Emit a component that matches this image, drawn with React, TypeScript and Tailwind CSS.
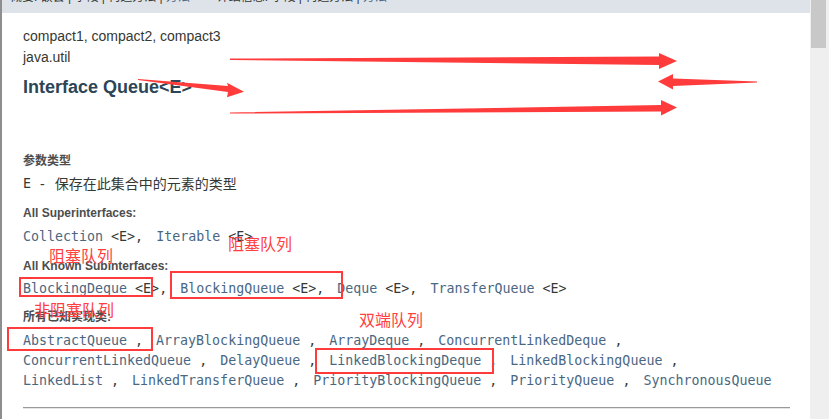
const sans = "font-['Arial','Liberation_Sans','Noto_Sans_CJK_SC',sans-serif]";
const mono = "font-['DejaVu_Sans_Mono','Liberation_Mono',monospace]";

const implRows = [
  ["AbstractQueue", "ArrayBlockingQueue", "ArrayDeque", "ConcurrentLinkedDeque"],
  ["ConcurrentLinkedQueue", "DelayQueue", "LinkedBlockingDeque", "LinkedBlockingQueue"],
  ["LinkedList", "LinkedTransferQueue", "PriorityBlockingQueue", "PriorityQueue", "SynchronousQueue"],
];

function Generic({ name, last }: { name: string; last?: boolean }) {
  return (
    <span className="flex whitespace-pre">
      <span className="text-[#4a6782]">{name}</span>
      <span className="text-[#353833]"> {"<E>"}</span>
      {!last && <span className="mr-[13px] text-[#353833]">,</span>}
    </span>
  );
}

function Annotations() {
  const red = "#ff3b3b";
  return (
    <>
      <svg className="pointer-events-none absolute left-0 top-0" width="829" height="419">
        <polygon fill={red} points="230,58.5 659,56.5 659,53 677,61 659,69 659,65 230,60" />
        <polygon fill={red} points="658,81.5 673,74 673,78.5 757,81.6 757,82.4 673,86 673,89.5" />
        <polygon fill={red} points="230,112.5 661,105 661,100 677,107.5 661,115.5 661,111.5 230,113.5" />
        <polygon fill={red} points="138,79 228,86 227,82.7 244,91.7 227,97.3 228,92 138,80" />
      </svg>
      <div className="absolute left-[19px] top-[277px] h-[20px] w-[134px] border-2 border-[#ff3b3b]" />
      <div className="absolute left-[170px] top-[271px] h-[28px] w-[173px] border-2 border-[#ff3b3b]" />
      <div className="absolute left-[7px] top-[327px] h-[24px] w-[146px] border-2 border-[#ff3b3b]" />
      <div className="absolute left-[315px] top-[348px] h-[26px] w-[179px] border-2 border-[#ff3b3b]" />
      <div className={`absolute left-[228px] top-[235px] text-[16px] leading-[20px] text-[#ff4040] ${sans}`}>阻塞队列</div>
      <div className={`absolute left-[49px] top-[247px] text-[16px] leading-[20px] text-[#ff4040] ${sans}`}>阻塞队列</div>
      <div className={`absolute left-[34px] top-[301px] text-[16px] leading-[20px] text-[#ff4040] ${sans}`}>非阻塞队列</div>
      <div className={`absolute left-[359px] top-[311px] text-[16px] leading-[20px] text-[#ff4040] ${sans}`}>双端队列</div>
    </>
  );
}

export default function App() {
  return (
    <div className={`relative flex h-[419px] w-[829px] overflow-hidden bg-white ${sans}`}>
      <div className="flex min-w-0 flex-1 flex-col border-l-2 border-[#8e8e8e]">
        <div className="h-[13px] overflow-hidden bg-[#dee3e9]">
          <div className="-mt-[11px] whitespace-pre pl-[8px] text-[12px] leading-[16px] text-[#353833]">
            概要: 嵌套 | 字段 | 构造方法 | <span className="text-[#4a6782]">方法</span>
            {"        "}详细信息: 字段 | 构造方法 | <span className="text-[#4a6782]">方法</span>
          </div>
        </div>

        <div className="flex flex-col pl-[21px] pr-[20px] text-[#353833]">
          <div className="mt-[13px] text-[14px] leading-[21px]">compact1, compact2, compact3</div>
          <div className="text-[14px] leading-[21px]">java.util</div>
          <h2 className="mt-[8px] text-[18px] font-bold leading-[22px] text-[#2c4557]">Interface Queue&lt;E&gt;</h2>

          <div className="mt-[55px] text-[12px] font-bold leading-[16px] text-[#4d4d4d]">参数类型</div>
          <div className="mt-[5px] flex text-[14px] leading-[20px]">
            <span className={mono + " text-[13.3px]"}>E</span>
            <span className="ml-[9px]">-</span>
            <span className="ml-[10px]">保存在此集合中的元素的类型</span>
          </div>

          <div className="mt-[11px] text-[12px] font-bold leading-[16px] text-[#4d4d4d]">All Superinterfaces:</div>
          <div className={`mt-[6px] flex text-[13.3px] leading-[20px] ${mono}`}>
            <Generic name="Collection" />
            <Generic name="Iterable" last />
          </div>

          <div className="mt-[11px] text-[12px] font-bold leading-[16px] text-[#4d4d4d]">All Known Subinterfaces:</div>
          <div className={`mt-[5px] flex text-[13.3px] leading-[20px] ${mono}`}>
            <Generic name="BlockingDeque" />
            <Generic name="BlockingQueue" />
            <Generic name="Deque" />
            <Generic name="TransferQueue" last />
          </div>

          <div className="mt-[10px] text-[12px] font-bold leading-[16px] text-[#4d4d4d]">所有已知实现类:</div>
          <div className={`mt-[6px] flex flex-col text-[13.3px] leading-[20px] ${mono}`}>
            {implRows.map((row, r) => (
              <div key={r} className="flex whitespace-pre">
                {row.map((name, i) => {
                  const end = r === implRows.length - 1 && i === row.length - 1;
                  return (
                    <span key={name} className="flex">
                      <span className="text-[#4a6782]">{name}</span>
                      {!end && <span className="inline-block w-[29px] text-[#353833]"> ,</span>}
                    </span>
                  );
                })}
              </div>
            ))}
          </div>

          <div className="mt-[16px] h-[2px] border-t border-[#9a9a9a] bg-[#e6e6e6]" />
        </div>
      </div>

      <div className="flex w-[19px] shrink-0 flex-col bg-[#efefef]">
        <div className="ml-[1px] h-[48px] w-[15px] bg-[#c8c8c8]" />
      </div>

      <Annotations />
    </div>
  );
}
